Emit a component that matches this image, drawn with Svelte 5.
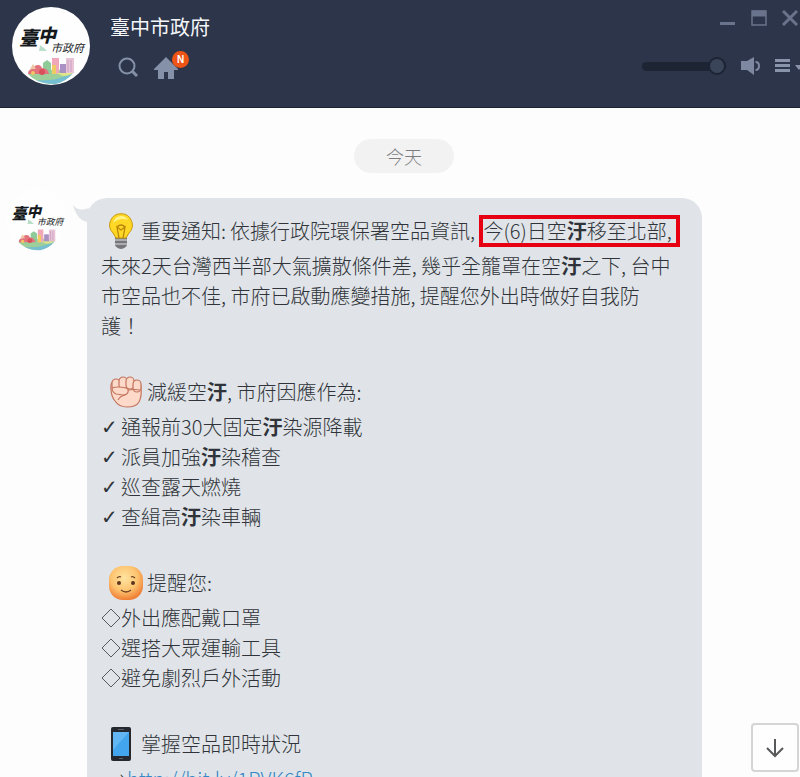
<script lang="ts">
  let volume = 100;

  const cityName = "臺中市政府";
  const measures = [
    ["通報前30大固定", "汙", "染源降載"],
    ["派員加強", "汙", "染稽查"],
    ["巡查露天燃燒", "", ""],
    ["查緝高", "汙", "染車輛"],
  ];
  const reminders = ["外出應配戴口罩", "選搭大眾運輸工具", "避免劇烈戶外活動"];
</script>

{#snippet cityLogo()}
  <svg viewBox="0 0 78 78" role="img" aria-label={cityName}>
    <circle cx="39" cy="39" r="39" fill="#fefefe" />
    <path d="M27 44l1-6 4 3 3 3z" fill="#b9dfc9" />
    <text class="brush" x="7" y="38" fill="#15191b">
      <tspan font-size="19" font-weight="900">臺</tspan><tspan dy="-3" font-size="18" font-weight="900">中</tspan><tspan dx="-5" dy="10" font-size="11">市政府</tspan>
    </text>
    <path d="M16 67q10-5 25-4 13-1 21 1-7 12-23 13-15-1-23-10z" fill="#9dcf9b" />
    <path d="M24 73q18 2 37-7-7 9-18 11-11 0-19-4z" fill="#75bfd0" />
    <path d="M31 56l4-3 4 3v11h-8z" fill="#8fcb99" />
    <path d="M40 51h7v16h-7z" fill="#f0a7ba" />
    <path d="M40 58h4v9h-4z" fill="#efcc61" />
    <path d="M48 57h6v9h-6z" fill="#aa91c4" />
    <path d="M54 51h8v15h-8z" fill="#e9c3d6" />
    <path d="M56 53v12M59 53v12" stroke="#c8a0c4" fill="none" />
    <path d="M44 66h17q-4 3-10 3z" fill="#dfe48a" />
    <path d="M16 67q0-5 5-5 1-4 5-4 3 0 4 3 6 0 7 6z" fill="#e2727c" />
    <path d="M18 62l3-5 3 5z" fill="#eec7a2" />
    <circle cx="21" cy="66" r="2" fill="#f3c562" />
    <circle cx="30" cy="65" r="3" fill="#d9505a" />
  </svg>
{/snippet}

<div class="chat">
  <header>
    <div class="avatar">{@render cityLogo()}</div>
    <div class="title">
      <h1>{cityName}</h1>
      <div class="actions">
        <button aria-label="搜尋">
          <svg width="22" height="22" viewBox="0 0 22 22" fill="none" stroke="#8591a9">
            <circle cx="9" cy="9" r="7.500" stroke-width="2" />
            <path d="M14 14l5 5" stroke-width="3" />
          </svg>
        </button>
        <button class="home" aria-label="主頁">
          <svg width="24" height="22" viewBox="0 0 24 22" fill="#8591a9">
            <path d="M12 0L0 12v1h4v9h6v-7h4v7h6v-9h4v-1z" />
          </svg>
          <span class="badge">N</span>
        </button>
      </div>
    </div>
    <div class="tools">
      <div class="window">
        <button aria-label="最小化">
          <svg width="16" height="16" viewBox="0 0 16 16"><path d="M0 12h15v3H0z" fill="#69738b" /></svg>
        </button>
        <button aria-label="最大化">
          <svg width="16" height="16" viewBox="0 0 16 16" fill="none" stroke="#69738b">
            <path d="M1 1h14v14H1z" stroke-width="1.5" />
            <path d="M1 3.5h14" stroke-width="6" />
          </svg>
        </button>
        <button aria-label="關閉">
          <svg width="16" height="16" viewBox="0 0 16 16"><path d="M1 1l14 14M15 1L1 15" stroke="#69738b" stroke-width="3" /></svg>
        </button>
      </div>
      <div class="sound">
        <input type="range" min="0" max="100" bind:value={volume} aria-label="透明度" />
        <button aria-label="音量">
          <svg width="20" height="20" viewBox="0 0 20 20" fill="#7e88a0">
            <path d="M1 5h6l7-4v18l-7-5H1z" />
            <path d="M15.500 6q3.500 0 3.500 4t-3.500 4" fill="none" stroke="#7e88a0" stroke-width="2" />
          </svg>
        </button>
        <button aria-label="選單">
          <svg width="26" height="16" viewBox="0 0 26 16" fill="#8993aa">
            <path d="M1 1h15v3H1zM1 6h15v3H1zM1 11h15v3H1zM21 7h8l-4 5z" />
          </svg>
        </button>
      </div>
    </div>
  </header>

  <time>今天</time>

  <main>
    <div class="sender">{@render cityLogo()}</div>
    <article>
      <svg class="tail" width="24" height="24" viewBox="0 0 24 24">
        <path d="M0 0Q5 6 12 4L24 2v20l-10-5Q4 15 0 0z" fill="#e0e4e8" />
      </svg>
      <p class="lead">
        <svg class="icon" width="24" height="36" viewBox="0 0 24 36">
          <path d="M6 24h12v8q-1 3-6 4-5-1-6-4z" fill="#77777b" />
          <path d="M6 27h12M6 31h12" stroke="#bfc0c2" stroke-width="1.500" />
          <path d="M12 .7a11.300 11.300 0 0 0-8 19.300l3 5h10l3-5A11.300 11.300 0 0 0 12 .7z" fill="#ffd725" stroke="#c99912" />
          <path d="M4 10q2-7 8-7 5 0 7 4-8-3-15 3z" fill="#fff38a" />
          <path d="M10 25L8 14l4 3 4-3-2 11M8 14q4-4 8 0" fill="none" stroke="#b88509" stroke-width="1.300" />
        </svg>重要通知<span class="colon">:</span>依據行政院環保署空品資訊, <mark>今(6)日空<b>汙</b>移至北部,</mark>
      </p>
      <p>
        未來2天台灣西半部大氣擴散條件差, 幾乎全籠罩在空<b>汙</b>之下, 台中<br />
        市空品也不佳, 市府已啟動應變措施, 提醒您外出時做好自我防<br />
        護！
      </p>

      <h2>
        <svg class="icon tight" width="34" height="32" viewBox="0 0 34 32" fill="#fcd9c8" stroke="#c4755f" stroke-width="1.200">
          <path d="M2 13Q1 7 5 5l21 0q6 0 6 7 1 8-2 14-3 5-12 5-8 0-12-6-4-5-4-12z" />
          <rect x="3" y="3" width="8" height="11" rx="4" />
          <rect x="10" y="1" width="8" height="12" rx="4" />
          <rect x="17" y="1" width="8" height="12" rx="4" />
          <rect x="24" y="4" width="8" height="12" rx="4" />
          <path d="M3 12q6-2 14 0 3 1 2 4-1 3-5 3l-7-1q-4-2-4-6z" />
          <path d="M19 14q6-1 12 0M16 19q-5 1-7 5" fill="none" />
        </svg>減緩空<b>汙</b>, 市府因應作為:
      </h2>
      <ul>
        {#each measures as [before, strong, after]}
          <li><span class="bullet">✓</span>{before}<b>{strong}</b>{after}</li>
        {/each}
      </ul>

      <h2>
        <svg class="icon tight" width="34" height="34" viewBox="0 0 34 34">
          <defs>
            <radialGradient id="face" cx="45%" cy="35%" r="65%">
              <stop offset="0" stop-color="#ffe4a0" />
              <stop offset=".6" stop-color="#fdc36f" />
              <stop offset="1" stop-color="#ef7f35" />
            </radialGradient>
          </defs>
          <rect width="34" height="34" rx="14" fill="url(#face)" />
          <circle cx="10" cy="17" r="2" fill="#5b351e" />
          <circle cx="24" cy="17" r="2" fill="#5b351e" />
          <path d="M8 12q2-2 4-1M22 11q2-1 4 1M12 24q5 4 10 0" fill="none" stroke="#6d4022" stroke-width="1.300" />
        </svg>提醒您:
      </h2>
      <ul>
        {#each reminders as reminder}
          <li>
            <svg width="20" height="20" viewBox="0 0 20 20">
              <path d="M10 1l9 9-9 9-9-9z" fill="none" stroke="#555a60" />
            </svg>{reminder}
          </li>
        {/each}
      </ul>

      <h2>
        <svg class="icon phone" width="20" height="34" viewBox="0 0 20 34">
          <rect width="20" height="34" rx="2" fill="#25292f" />
          <path d="M2 5h16v24H2z" fill="#42a5ed" />
          <path d="M2 5h16L2 23z" fill="#61b6f3" />
          <path d="M7 2.500h6M8 31.500h4" stroke="#59606a" />
        </svg>掌握空品即時狀況
      </h2>
      <p class="link">→<a href="http://bit.ly/1PVK6fP">http://bit.ly/1PVK6fP</a></p>
    </article>
  </main>

  <button class="down" aria-label="捲到最下方">
    <svg width="20" height="20" viewBox="0 0 20 20" fill="none" stroke="#58595b" stroke-width="2">
      <path d="M10 1v17M2 10l8 8 8-8" />
    </svg>
  </button>
</div>

<style>
  .chat {
    height: 100vh;
    display: flex;
    flex-direction: column;
    overflow: hidden;
    background: #fdfdfd;
    color: #30343a;
    font-family: "Noto Sans CJK TC", "Liberation Sans", sans-serif;
    font-size: 20px;
    font-weight: 300;
    line-height: 30px;
  }

  header {
    display: flex;
    flex: none;
    box-sizing: border-box;
    height: 108px;
    padding: 7px 0 0 12px;
    background: #2c3549;
    border-bottom: 1px solid #1c2332;
  }

  button {
    display: flex;
    padding: 0;
    border: 0;
    background: none;
    cursor: pointer;
  }

  .avatar svg,
  .sender svg {
    display: block;
    width: 100%;
  }

  .avatar {
    width: 78px;
  }

  .brush {
    font-family: "Noto Sans CJK TC", serif;
    font-style: italic;
    font-weight: 400;
  }

  .title {
    flex: 1;
    margin: 5px 0 0 20px;
  }

  h1 {
    margin: 0;
    color: #f4f6fa;
    font-size: 20px;
    font-weight: 400;
    line-height: 30px;
  }

  .actions {
    display: flex;
    gap: 14px;
    margin: 15px 0 0 8px;
  }

  .home {
    position: relative;
  }

  .badge {
    position: absolute;
    top: -6px;
    right: -11px;
    width: 17px;
    border-radius: 50%;
    background: #ed5415;
    color: #fff;
    font: bold 10px/17px "Liberation Sans", sans-serif;
    text-align: center;
  }

  .tools {
    display: flex;
    flex-direction: column;
    align-items: flex-end;
    gap: 30px;
    padding-top: 3px;
  }

  .window {
    display: flex;
    gap: 15px;
    padding-right: 2px;
  }

  .sound {
    display: flex;
    align-items: center;
    gap: 14px;
    height: 20px;
  }

  input[type="range"] {
    appearance: none;
    width: 84px;
    height: 9px;
    margin: 0;
    border-radius: 5px;
    background: #1d2434;
  }

  input[type="range"]::-webkit-slider-thumb {
    appearance: none;
    box-sizing: border-box;
    width: 18px;
    height: 18px;
    border: 2px solid #1d2434;
    border-radius: 50%;
    background: #3b4559;
  }

  time {
    align-self: center;
    margin: 31px 0 16px 8px;
    padding: 2px 32px;
    border-radius: 17px;
    background: #f2f2f3;
    color: #7b7d80;
    font-size: 18px;
  }

  main {
    display: flex;
    align-items: flex-start;
    gap: 19px;
    padding: 0 98px 0 6px;
  }

  .sender {
    flex: none;
    width: 62px;
  }

  article {
    position: relative;
    flex: 1;
    min-width: 0;
    margin-top: 9px;
    padding: 13px 14px;
    border-radius: 20px;
    background: #e0e4e8;
    white-space: nowrap;
  }

  .tail {
    position: absolute;
    top: 7px;
    left: -14px;
  }

  p,
  h2,
  ul {
    margin: 0;
    padding: 0;
    font-size: 20px;
    font-weight: 300;
    list-style: none;
  }

  .lead,
  h2 {
    display: flex;
    align-items: center;
    height: 40px;
  }

  .lead {
    white-space: pre;
  }

  h2 {
    margin-top: 31px;
  }

  b {
    font-weight: 700;
  }

  .icon {
    flex: none;
    margin: 0 8px;
  }

  .tight {
    margin-right: 4px;
  }

  .phone {
    margin: 0 10px;
  }

  .colon {
    width: 9px;
  }

  mark {
    padding: 0 4px 0 0;
    border: 4px solid #e60012;
    background: none;
    color: inherit;
    line-height: 24px;
  }

  li {
    display: flex;
    align-items: center;
  }

  .bullet {
    width: 20px;
    font-family: "DejaVu Sans", sans-serif;
    font-weight: 700;
  }

  a {
    color: #3787c4;
    text-decoration: none;
  }

  .link {
    padding-left: 6px;
  }

  .down {
    position: absolute;
    right: 1px;
    bottom: 5px;
    align-items: center;
    justify-content: center;
    width: 48px;
    height: 49px;
    border: 2px solid #d5d5d6;
    border-radius: 4px;
    background: #fefefe;
  }
</style>
